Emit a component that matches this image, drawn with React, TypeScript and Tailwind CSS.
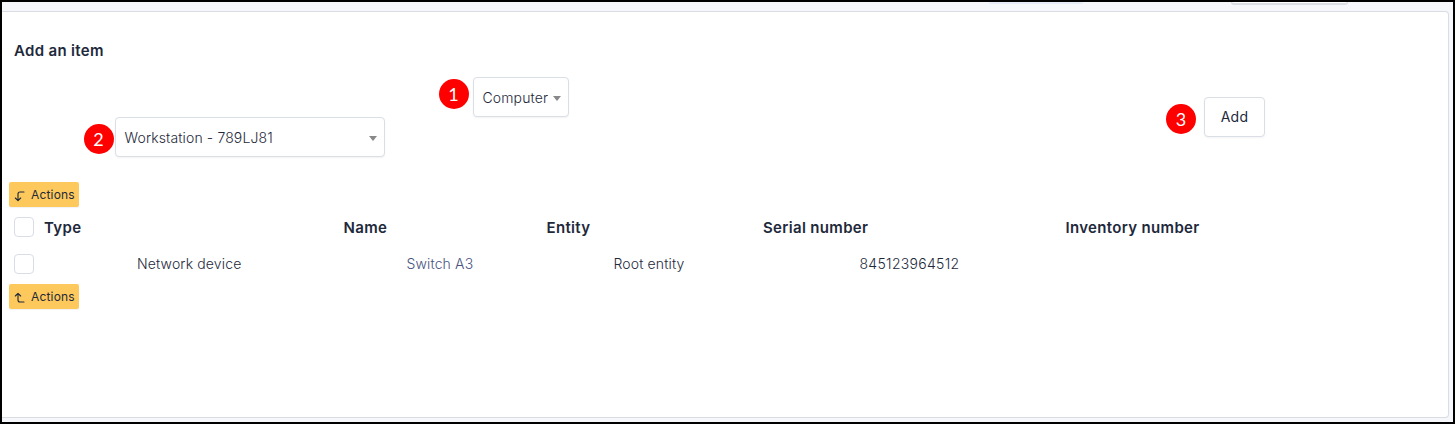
import type { ReactNode } from "react";

function Marker({ n, className }: { n: number; className: string }) {
  return (
    <span
      className={`flex h-[30px] w-[30px] shrink-0 items-center justify-center rounded-full bg-[#fe0000] font-['Lato',sans-serif] text-[18px] leading-none font-normal text-white ${className}`}
    >
      {n}
    </span>
  );
}

function Select({ children, className }: { children: ReactNode; className: string }) {
  return (
    <div
      className={`flex h-10 shrink-0 items-center justify-between rounded-[4px] border border-[#dadfe5] bg-white pr-[7px] pl-[8.5px] tracking-[0.13px] shadow-[0_1px_2px_rgba(30,41,59,0.06)] ${className}`}
    >
      <span className="whitespace-nowrap">{children}</span>
      <svg width="8" height="5" viewBox="0 0 8 5" className="mt-[3px]">
        <path d="M0 0h8L4 5z" fill="#888" />
      </svg>
    </div>
  );
}

function ActionButton({ up }: { up?: boolean }) {
  return (
    <button className="ml-[7px] flex h-[25px] w-[70px] items-center rounded-[2px] bg-[#fec95c] pl-[3px] text-[12px] leading-none font-normal tracking-[0.17px] text-[#1e293b] shadow-[0_1px_1px_rgba(30,41,59,0.06)]">
      <svg
        width="16"
        height="16"
        viewBox="0 0 24 24"
        fill="none"
        stroke="currentColor"
        strokeWidth="1.7"
        strokeLinecap="round"
        strokeLinejoin="round"
        className="mt-[2px] mr-[3px] shrink-0"
      >
        <path d={up ? "M18 18h-6a3 3 0 0 1-3-3V5L5 9m8 0L9 5" : "M18 6h-6a3 3 0 0 0-3 3v10l-4-4m8 0-4 4"} />
      </svg>
      Actions
    </button>
  );
}

function Checkbox() {
  return <span className="ml-3 h-5 w-5 shrink-0 rounded-[4px] border border-[#dadce6] bg-white" />;
}

export default function App() {
  return (
    <div className="flex h-[424px] w-[1455px] flex-col overflow-hidden border-2 border-black bg-[#f5f7fb] font-['Inter',sans-serif] text-[14px] font-[350] text-[#1e293b]">
      <div className="flex h-[9px] shrink-0 items-start">
        <div className="ml-[987px] h-[2px] w-[94px] rounded-b-[2px] bg-[#e6edf7]" />
        <div className="ml-[148px] h-[3px] w-[117px] rounded-b-[3px] border-x border-b-2 border-[#dadfe5] bg-white" />
      </div>
      <main className="flex h-[407px] w-[1447px] shrink-0 flex-col rounded-r-[4px] border-y border-r border-[#dadce3] bg-white">
        <h1 className="mt-[29px] ml-3 h-5 text-[15px] leading-5 font-semibold tracking-[0.33px]">Add an item</h1>
        <div className="mt-[16px] flex h-20 items-start">
          <div className="mt-10 flex">
            <Marker n={2} className="mt-[7px] ml-[81.5px]" />
            <Select className="ml-[1.5px] w-[270px]">Workstation - 789LJ81</Select>
          </div>
          <div className="flex">
            <Marker n={1} className="mt-[2px] ml-[53.5px]" />
            <Select className="ml-[4.5px] w-[96px]">Computer</Select>
          </div>
          <div className="mt-5 flex">
            <Marker n={3} className="mt-[7px] ml-[597px]" />
            <button className="ml-[8px] h-10 w-[61px] rounded-[4px] border border-[#dadfe5] bg-white pb-px font-normal tracking-[0.3px] shadow-[0_1px_2px_rgba(30,41,59,0.05)]">
              Add
            </button>
          </div>
        </div>
        <div className="mt-[25px]">
          <ActionButton />
        </div>
        <div className="mt-[10px] flex h-5 items-center text-[15px] leading-5 font-semibold tracking-[0.33px] whitespace-nowrap">
          <Checkbox />
          <div className="flex pt-[2px]">
            <span className="ml-[10px] w-[299.5px]">Type</span>
            <span className="w-[203px]">Name</span>
            <span className="w-[216.5px]">Entity</span>
            <span className="w-[302.5px]">Serial number</span>
            <span>Inventory number</span>
          </div>
        </div>
        <div className="mt-[17px] flex h-5 items-center leading-5 tracking-[0.14px] whitespace-nowrap">
          <Checkbox />
          <span className="ml-[103px] w-[269.5px]">Network device</span>
          <a className="w-[207px] text-[#49547f]">Switch A3</a>
          <span className="w-[246px]">Root entity</span>
          <span className="tracking-[0.3px]">845123964512</span>
        </div>
        <div className="mt-[10px]">
          <ActionButton up />
        </div>
      </main>
    </div>
  );
}
